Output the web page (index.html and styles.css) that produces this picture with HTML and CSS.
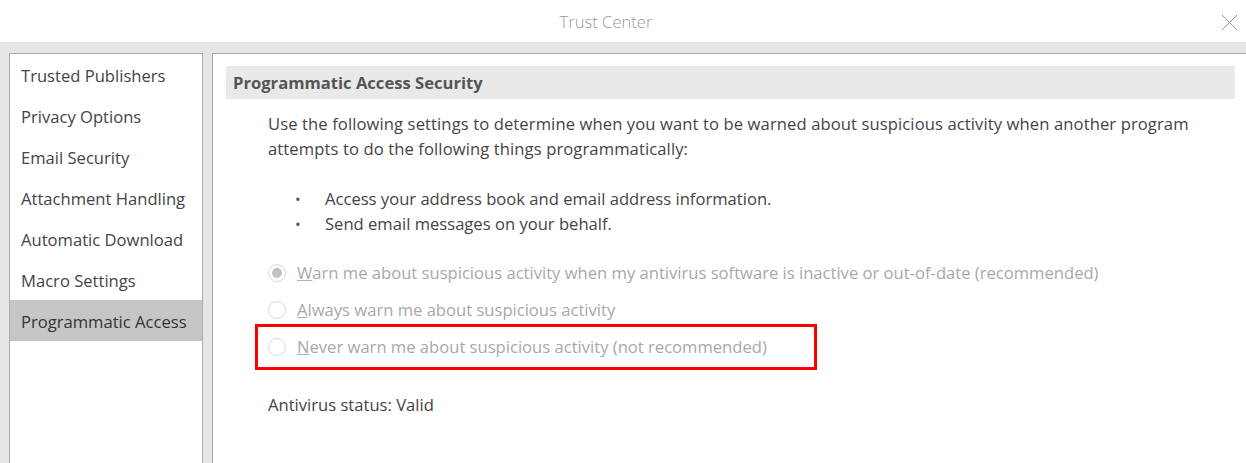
FILE: index.html
```html
<!DOCTYPE html>
<html lang="en">
  <head>
    <meta charset="UTF-8" />
    <title>Trust Center</title>
    <link rel="stylesheet" href="styles.css">
  </head>
  <body>
    <div class="titlebar">
      <div></div>
      <div class="title">Trust Center</div>
      <div class="close">
        <svg width="17" height="17" viewBox="0 0 17 17">
          <path d="M1 1 L16 16 M16 1 L1 16" stroke="#9a9a9a" stroke-width="1" fill="none" />
        </svg>
      </div>
    </div>

    <div class="main">
      <div class="sidebar">
        <div class="nav-item">Trusted Publishers</div>
        <div class="nav-item">Privacy Options</div>
        <div class="nav-item">Email Security</div>
        <div class="nav-item">Attachment Handling</div>
        <div class="nav-item">Automatic Download</div>
        <div class="nav-item">Macro Settings</div>
        <div class="nav-item selected">Programmatic Access</div>
      </div>

      <div class="content">
        <div class="section-head">Programmatic Access Security</div>
        <div class="section-body">
          <p class="intro">
            Use the following settings to determine when you want to be warned about suspicious activity when another program
            attempts to do the following things programmatically:
          </p>
          <ul class="things">
            <li>Access your address book and email address information.</li>
            <li>Send email messages on your behalf.</li>
          </ul>

          <div class="options">
            <div class="option">
              <span class="radio checked"></span>
              <span class="label"><u>W</u>arn me about suspicious activity when my antivirus software is inactive or out-of-date (recommended)</span>
            </div>
            <div class="option">
              <span class="radio"></span>
              <span class="label"><u>A</u>lways warn me about suspicious activity</span>
            </div>
            <div class="option highlight">
              <span class="radio"></span>
              <span class="label"><u>N</u>ever warn me about suspicious activity (not recommended)</span>
            </div>
          </div>

          <p class="status">Antivirus status: Valid</p>
        </div>
      </div>
    </div>
  </body>
</html>
```

FILE: styles.css
```css
body {
  margin: 0;
  font-family: 'Open Sans', 'Noto Sans', sans-serif;
  font-size: 16.6px;
  color: #444;
  background: #fff;
  height: 463px;
  overflow: hidden;
}

.titlebar {
  height: 42px;
  display: grid;
  grid-template-columns: 1fr auto 1fr;
  align-items: center;
}
.title {
  color: #999;
  font-size: 16.6px;
  font-weight: 300;
  padding-right: 34px;
}
.close {
  justify-self: end;
  padding-right: 8px;
  height: 17px;
}

.main {
  background: #e6e6e6;
  height: 421px;
  display: flex;
  gap: 9px;
  padding: 11px 0 0 9px;
  box-sizing: border-box;
}

.sidebar {
  width: 194px;
  flex-shrink: 0;
  background: #fff;
  border: 1px solid #ababab;
  border-bottom: none;
  box-sizing: border-box;
}
.nav-item {
  height: 41px;
  line-height: 44px;
  padding-left: 11px;
  white-space: nowrap;
}
.nav-item.selected {
  background: #c6c6c6;
  color: #333;
}

.content {
  flex: 1;
  background: #fff;
  border-top: 1px solid #ababab;
  border-left: 1px solid #ababab;
  padding: 12px 11px 0 13px;
}

.section-head {
  height: 33px;
  line-height: 33px;
  background: #e9e9e9;
  padding-left: 7px;
  font-weight: bold;
  color: #555;
}

.section-body {
  padding-left: 42px;
}

.intro {
  margin: 12px 0 0;
  line-height: 25px;
  letter-spacing: 0.1px;
}

.things {
  margin: 26px 0 0;
  padding-left: 57px;
  line-height: 24.5px;
  list-style: none;
}
.things li {
  position: relative;
}
.things li::before {
  content: "\2022";
  position: absolute;
  left: -30px;
  color: #555;
  font-size: 15px;
}

.options {
  margin-top: 18px;
}
.option {
  height: 37px;
  display: flex;
  align-items: center;
  gap: 11px;
  color: #a8a8a8;
}
.option u {
  text-decoration-color: #b0b0b0;
}
.option.highlight {
  width: 562px;
  height: 46px;
  box-sizing: border-box;
  border: 3px solid #ff0000;
  margin: -4.5px 0 -4.5px -13px;
  padding-left: 10px;
}

.radio {
  width: 18px;
  height: 18px;
  box-sizing: border-box;
  border: 1px solid #d8d8d8;
  border-radius: 50%;
  display: flex;
  align-items: center;
  justify-content: center;
  flex-shrink: 0;
}
.radio.checked::after {
  content: "";
  width: 10px;
  height: 10px;
  border-radius: 50%;
  background: #c2c2c2;
}

.status {
  margin: 27px 0 0;
  line-height: 25px;
}
```
